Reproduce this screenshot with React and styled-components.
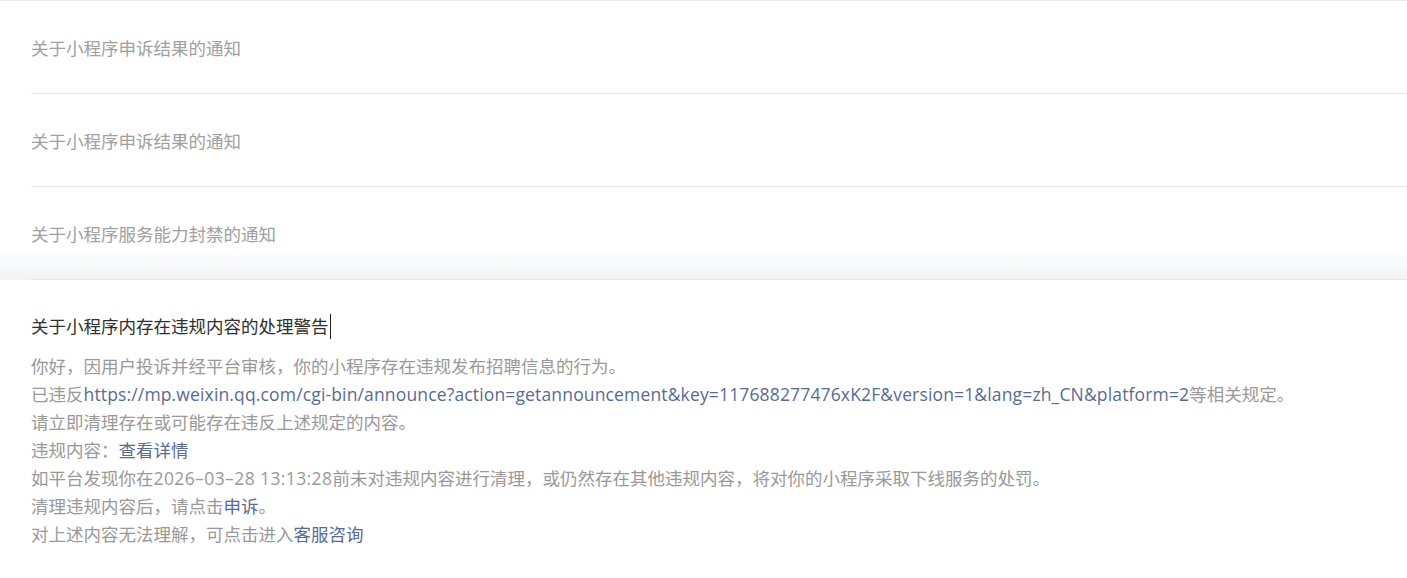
import React from "react";
import styled, { createGlobalStyle } from "styled-components";

const Global = createGlobalStyle`
  html, body { margin: 0; padding: 0; background: #fff; }
  body {
    font-family: "Open Sans", "Noto Sans CJK SC", sans-serif;
    -webkit-font-smoothing: antialiased;
  }
`;

const List = styled.div`
  border-top: 1px solid #eeeeee;
  width: 100%;
`;

const Item = styled.div`
  background: ${(p) =>
    p.$shaded
      ? "linear-gradient(to bottom, #ffffff 0px, #ffffff 58px, #f3f4f6 92px)"
      : "#ffffff"};
`;

const ItemInner = styled.div`
  margin-left: 31px;
  height: 92px;
  border-bottom: 1px solid #e6e6e6;
  display: flex;
  align-items: center;
  font-size: 17.5px;
  color: #a0a0a0;
`;

const Detail = styled.section`
  padding: 32px 0 0 31px;
`;

const DetailTitle = styled.h3`
  margin: 0;
  font-weight: normal;
  font-size: 17.5px;
  line-height: 28px;
  color: #2f2f2f;
  display: flex;
  align-items: center;
`;

const Caret = styled.span`
  display: inline-block;
  width: 1px;
  height: 25px;
  background: #222;
  margin-left: 1px;
`;

const Body = styled.div`
  margin-top: 12px;
  font-size: 17.5px;
  line-height: 28px;
  color: #999999;
`;

const Line = styled.p`
  margin: 0;
  white-space: nowrap;
`;

const Link = styled.a`
  color: #576b95;
  text-decoration: none;
  letter-spacing: ${(p) => (p.$url ? "0.15px" : "0")};
`;

const Stamp = styled.span`
  letter-spacing: 0.4px;
`;

const items = [
  "关于小程序申诉结果的通知",
  "关于小程序申诉结果的通知",
  "关于小程序服务能力封禁的通知",
];

export default function App() {
  return (
    <>
      <Global />
      <List>
        {items.map((t, i) => (
          <Item key={i} $shaded={i === items.length - 1}>
            <ItemInner>{t}</ItemInner>
          </Item>
        ))}
      </List>
      <Detail>
        <DetailTitle>
          关于小程序内存在违规内容的处理警告
          <Caret />
        </DetailTitle>
        <Body>
          <Line>你好，因用户投诉并经平台审核，你的小程序存在违规发布招聘信息的行为。</Line>
          <Line>
            已违反
            <Link href="#" $url>
              https://mp.weixin.qq.com/cgi-bin/announce?action=getannouncement&amp;key=117688277476xK2F&amp;version=1&amp;lang=zh_CN&amp;platform=2
            </Link>
            等相关规定。
          </Line>
          <Line>请立即清理存在或可能存在违反上述规定的内容。</Line>
          <Line>
            违规内容：<Link href="#">查看详情</Link>
          </Line>
          <Line>
            如平台发现你在<Stamp>2026–03–28 13:13:28</Stamp>前未对违规内容进行清理，或仍然存在其他违规内容，将对你的小程序采取下线服务的处罚。
          </Line>
          <Line>
            清理违规内容后，请点击<Link href="#">申诉</Link>。
          </Line>
          <Line>
            对上述内容无法理解，可点击进入<Link href="#">客服咨询</Link>
          </Line>
        </Body>
      </Detail>
    </>
  );
}
